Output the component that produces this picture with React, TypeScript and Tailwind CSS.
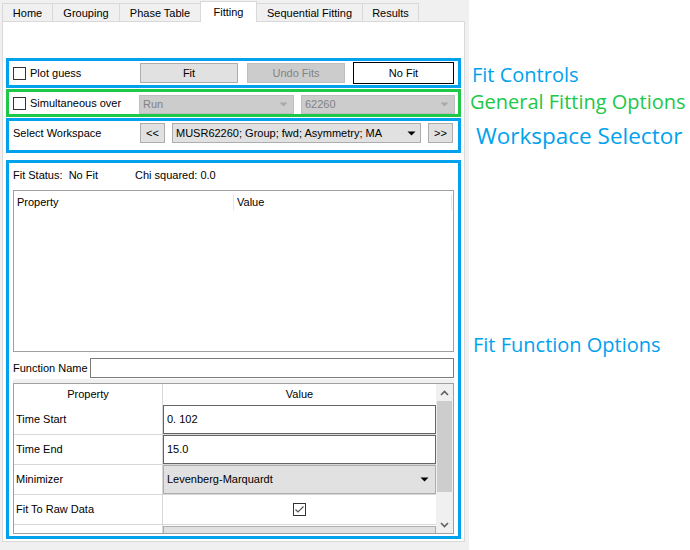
import type { ReactNode } from "react";

const tabs = [
  { label: "Home", w: "w-[50px]" },
  { label: "Grouping", w: "w-[67px]" },
  { label: "Phase Table", w: "w-[81px]" },
  { label: "Fitting", w: "w-[57px]", active: true },
  { label: "Sequential Fitting", w: "w-[105px]" },
  { label: "Results", w: "w-[57px]" },
];

const Check = ({ checked }: { checked?: boolean }) => (
  <span className="flex h-[13px] w-[13px] shrink-0 items-center justify-center border border-[#333] bg-white">
    {checked && (
      <svg width="11" height="11" viewBox="0 0 11 11">
        <polyline points="1.5,5.5 4,8 9.5,2.5" fill="none" stroke="#555" strokeWidth="1.2" />
      </svg>
    )}
  </span>
);

const Arrow = ({ color = "#000" }: { color?: string }) => (
  <svg width="9" height="5" viewBox="0 0 9 5">
    <polygon points="0.5,0.5 8.5,0.5 4.5,4.5" fill={color} />
  </svg>
);

const Chevron = ({ up }: { up?: boolean }) => (
  <svg width="9" height="6" viewBox="0 0 9 6">
    <polyline
      points={up ? "1,5 4.5,1.5 8,5" : "1,1 4.5,4.5 8,1"}
      fill="none"
      stroke="#606060"
      strokeWidth="1.6"
    />
  </svg>
);

function Tabs() {
  return (
    <div className="flex h-[21px] items-end">
      {tabs.map((t, i) => {
        const afterActive = i > 0 && tabs[i - 1].active;
        const last = i === tabs.length - 1;
        return t.active ? (
          <div
            key={t.label}
            className={`${t.w} relative z-10 -mb-px flex h-[21px] items-center justify-center border-x border-t border-[#d9d9d9] bg-white`}
          >
            {t.label}
          </div>
        ) : (
          <div
            key={t.label}
            className={`${t.w} flex h-[18px] items-center justify-center border-t border-[#d9d9d9] pt-[1px] ${afterActive ? "" : "border-l"} ${last ? "border-r" : ""}`}
          >
            {t.label}
          </div>
        );
      })}
    </div>
  );
}

function Row({ label, children }: { label: string; children: ReactNode }) {
  return (
    <div className="flex h-[30px] border-b border-[#d8d8d8]">
      <div className="flex w-[149px] items-center border-r border-[#d8d8d8] pl-[2px]">{label}</div>
      <div className="flex flex-1">{children}</div>
    </div>
  );
}

export default function App() {
  return (
    <div className="flex h-[550px] w-[690px] overflow-hidden bg-white font-['Liberation_Sans',Arial,sans-serif] text-[11px] text-black">
      {/* left: the fitting tab */}
      <div className="w-[469px] shrink-0 bg-[#f0f0f0] pl-[2px]">
        <Tabs />
        <div className="h-[521px] w-[463px] border border-[#d9d9d9] bg-white pt-[36px]">
          {/* fit controls */}
          <div className="ml-[3px] flex h-[30px] w-[455px] items-center border-[3px] border-[#00a2ed] pl-[4px]">
            <div className="flex w-[127px] items-center gap-[4px]">
              <Check />
              <span>Plot guess</span>
            </div>
            <div className="flex h-[20px] w-[98px] items-center justify-center border border-[#adadad] bg-[#e1e1e1]">Fit</div>
            <div className="ml-[9px] flex h-[20px] w-[98px] items-center justify-center border border-[#bfbfbf] bg-[#cccccc] text-[#838383]">
              Undo Fits
            </div>
            <div className="ml-[8px] flex h-[22px] w-[101px] items-center justify-center border border-black bg-white">No Fit</div>
          </div>

          {/* general fitting options */}
          <div className="ml-[3px] mt-px flex h-[28px] w-[455px] items-center border-[3px] border-[#20c84a] pl-[4px]">
            <div className="flex w-[126px] items-center gap-[4px]">
              <Check />
              <span>Simultaneous over</span>
            </div>
            <div className="mt-[2px] flex h-[19px] w-[155px] items-center justify-between border border-[#bfbfbf] bg-[#cccccc] pl-[3px] pr-[5px] text-[#838383]">
              <span>Run</span>
              <Arrow color="#a8a8a8" />
            </div>
            <div className="ml-[7px] mt-[2px] flex h-[19px] w-[154px] items-center justify-between border border-[#bfbfbf] bg-[#cccccc] pl-[3px] pr-[5px] text-[#838383]">
              <span>62260</span>
              <Arrow color="#a8a8a8" />
            </div>
          </div>

          {/* workspace selector */}
          <div className="ml-[3px] mt-px h-[35px] w-[455px] border-[3px] border-[#00a2ed] pl-[4px] pt-[2px]">
            <div className="flex h-[20px] items-center">
              <span className="w-[127px]">Select Workspace</span>
              <div className="flex h-[20px] w-[25px] items-center justify-center border border-[#adadad] bg-[#e1e1e1]">&lt;&lt;</div>
              <div className="ml-[7px] flex h-[20px] w-[249px] items-center justify-between border border-[#adadad] bg-[#e1e1e1] pl-[3px] pr-[4px]">
                <span>MUSR62260; Group; fwd; Asymmetry; MA</span>
                <Arrow />
              </div>
              <div className="ml-[7px] flex h-[20px] w-[25px] items-center justify-center border border-[#adadad] bg-[#e1e1e1]">&gt;&gt;</div>
            </div>
          </div>

          {/* fit function options */}
          <div className="ml-[3px] mt-[7px] flex h-[379px] w-[455px] flex-col border-[3px] border-[#00a2ed] px-[4px] pt-[2px]">
            <div className="flex h-[20px] items-center">
              <span className="w-[122px]">Fit Status:&nbsp; No Fit</span>
              <span>Chi squared: 0.0</span>
            </div>

            <div className="mt-[5px] h-[162px] w-[441px] border border-[#a0a0a0] bg-white">
              <div className="flex h-[22px] items-center">
                <span className="w-[219px] pl-[3px]">Property</span>
                <span className="h-[15px] w-px bg-[#e5e5e5]" />
                <span className="flex-1 pl-[3px]">Value</span>
                <span className="mr-px h-[15px] w-px bg-[#e5e5e5]" />
              </div>
            </div>

            <div className="mt-[6px] flex h-[20px] items-center">
              <span className="w-[77px]">Function Name</span>
              <div className="h-[20px] w-[364px] border border-[#7a7a7a] bg-white" />
            </div>

            <div className="mt-px h-[4px] w-[441px] bg-[#f0f0f0]" />

            <div className="flex h-[151px] w-[441px] border border-[#a0a0a0] bg-white">
              <div className="flex-1 overflow-hidden">
                <div className="flex h-[21px]">
                  <div className="flex w-[149px] items-center justify-center border-r border-[#d8d8d8]">Property</div>
                  <div className="flex flex-1 items-center justify-center">Value</div>
                </div>
                <Row label="Time Start">
                  <div className="flex flex-1 items-center border border-[#646464] pl-[3px]">0. 102</div>
                </Row>
                <Row label="Time End">
                  <div className="flex flex-1 items-center border border-[#646464] pl-[3px]">15.0</div>
                </Row>
                <Row label="Minimizer">
                  <div className="flex flex-1 items-center justify-between border border-[#adadad] bg-[#e1e1e1] pl-[3px] pr-[6px]">
                    <span>Levenberg-Marquardt</span>
                    <Arrow />
                  </div>
                </Row>
                <Row label="Fit To Raw Data">
                  <div className="flex flex-1 items-center justify-center">
                    <Check checked />
                  </div>
                </Row>
                <div className="flex h-[10px]">
                  <div className="w-[149px] border-r border-[#d8d8d8]" />
                  <div className="mt-px flex-1 border border-[#adadad] bg-[#e1e1e1]" />
                </div>
              </div>

              {/* scrollbar */}
              <div className="flex w-[17px] flex-col bg-[#f0f0f0]">
                <div className="flex h-[17px] items-center justify-center">
                  <Chevron up />
                </div>
                <div className="mx-px h-[91px] bg-[#cdcdcd]" />
                <div className="flex-1" />
                <div className="flex h-[17px] items-center justify-center">
                  <Chevron />
                </div>
              </div>
            </div>
          </div>
        </div>
      </div>

      {/* right: annotation labels */}
      <div className="flex flex-1 flex-col font-['Open_Sans',sans-serif]">
        <div className="ml-[3px] mt-[65px] text-[20px] leading-[20px] text-[#00a2ed]">Fit Controls</div>
        <div className="ml-px mt-[7px] text-[20px] leading-[20px] text-[#20c84a]">General Fitting Options</div>
        <div className="ml-[7px] mt-[13px] text-[22.5px] leading-[22px] text-[#00a2ed]">Workspace Selector</div>
        <div className="ml-[4px] mt-[188px] text-[20px] leading-[20px] text-[#00a2ed]">Fit Function Options</div>
      </div>
    </div>
  );
}
